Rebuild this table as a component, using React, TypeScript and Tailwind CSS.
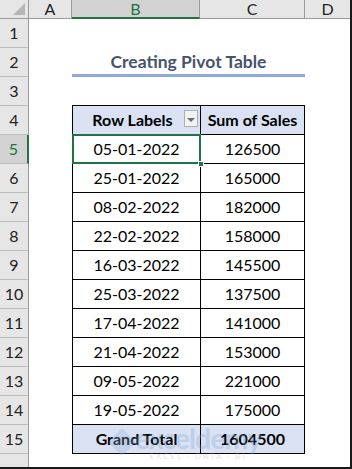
import React from "react";

const rows = [
  ["05-01-2022", "126500"],
  ["25-01-2022", "165000"],
  ["08-02-2022", "182000"],
  ["22-02-2022", "158000"],
  ["16-03-2022", "145500"],
  ["25-03-2022", "137500"],
  ["17-04-2022", "141000"],
  ["21-04-2022", "153000"],
  ["09-05-2022", "221000"],
  ["19-05-2022", "175000"],
];

function RowHead(props: { n: number; active?: boolean }) {
  return (
    <div
      className={`w-[29px] h-[29px] shrink-0 flex items-center justify-center border-b border-[#bdbdbd] text-[16px] ${
        props.active
          ? "bg-[#d2d2d2] border-r-2 border-r-[#217346] text-[#217346]"
          : "bg-[#e6e6e6] border-r border-r-[#9b9b9b] text-[#222]"
      }`}
    >
      {props.n}
    </div>
  );
}

function Row(props: { n: number; active?: boolean; children?: React.ReactNode }) {
  return (
    <div className="flex h-[29px]">
      <RowHead n={props.n} active={props.active} />
      <div className="w-[43px] shrink-0" />
      {props.children}
    </div>
  );
}

export default function App() {
  return (
    <div
      className="w-[352px] h-[469px] overflow-hidden bg-white border-r-2 border-b-2 border-[#1a1a1a] relative"
      style={{ fontFamily: "Lato, 'Liberation Sans', sans-serif" }}
    >
      {/* column headers */}
      <div className="flex h-[19px] text-[16px] text-[#222]">
        <div className="w-[29px] shrink-0 bg-[#e6e6e6] border-r border-b border-[#9b9b9b] relative">
          <div className="absolute right-[3px] bottom-[3px] w-0 h-0 border-l-[12px] border-l-transparent border-b-[12px] border-b-[#b7b7b7]" />
        </div>
        <div className="w-[43px] shrink-0 bg-[#e6e6e6] border-r border-b border-[#9b9b9b] flex items-center justify-center leading-none">
          A
        </div>
        <div className="w-[128px] shrink-0 bg-[#d2d2d2] border-r border-r-[#9b9b9b] border-b-2 border-b-[#217346] flex items-center justify-center leading-none text-[#217346]">
          B
        </div>
        <div className="w-[105px] shrink-0 bg-[#e6e6e6] border-r border-b border-[#9b9b9b] flex items-center justify-center leading-none">
          C
        </div>
        <div className="flex-1 bg-[#e6e6e6] border-b border-[#9b9b9b] flex items-center justify-center leading-none">
          D
        </div>
      </div>

      <Row n={1} />
      <Row n={2}>
        <div className="w-[233px] shrink-0 border-b-[3px] border-[#8ea9db] flex items-center justify-center pt-[2px] text-[17.5px] font-bold text-[#44546a]">
          Creating Pivot Table
        </div>
      </Row>
      <Row n={3}>
        <div className="w-[233px] shrink-0 border-b border-black" />
      </Row>
      <Row n={4}>
        <div className="w-[128px] shrink-0 bg-[#d9e1f2] border-l border-b border-black flex items-center justify-center relative text-[16px] font-bold text-black">
          <span className="mr-[8px]">Row Labels</span>
          <div className="absolute right-[2px] top-[4px] w-[14px] h-[17px] bg-[#f2f2f2] border border-[#b0b0b0] flex items-end justify-center pb-[4px]">
            <div className="w-0 h-0 border-l-[4px] border-r-[4px] border-t-[4px] border-l-transparent border-r-transparent border-t-[#6b6b6b]" />
          </div>
        </div>
        <div className="w-[105px] shrink-0 bg-[#d9e1f2] border-l border-r border-b border-black flex items-center justify-center text-[16px] font-bold text-black">
          Sum of Sales
        </div>
      </Row>
      {rows.map(([d, v], i) => (
        <Row key={d} n={i + 5} active={i === 0}>
          <div className="w-[128px] shrink-0 border-l border-b border-black flex items-center justify-center text-[16px] text-black relative">
            {d}
            {i === 0 && (
              <>
                <div className="absolute -left-px -top-px w-[129px] h-[30px] border-2 border-[#217346]" />
                <div className="absolute right-[-4px] bottom-[-4px] w-[6px] h-[6px] bg-[#217346] border border-white" />
              </>
            )}
          </div>
          <div className="w-[105px] shrink-0 border-l border-r border-b border-black flex items-center justify-center text-[16px] text-black">
            {v}
          </div>
        </Row>
      ))}
      <Row n={15}>
        <div className="w-[128px] shrink-0 bg-[#d9e1f2] border-l border-b border-black flex items-center justify-center text-[16px] font-bold text-black">
          Grand Total
        </div>
        <div className="w-[105px] shrink-0 bg-[#d9e1f2] border-l border-r border-b border-black flex items-center justify-center text-[16px] font-bold text-black">
          1604500
        </div>
      </Row>
      <div className="flex h-[14px]">
        <div className="w-[29px] shrink-0 bg-[#e6e6e6] border-r border-[#9b9b9b]" />
      </div>

      {/* watermark */}
      <div className="absolute left-[112px] top-[424px] flex items-center gap-[3px] opacity-30 pointer-events-none">
        <div className="w-[20px] h-[20px] bg-[#8fb0d8] rotate-45 rounded-[3px]" />
        <div className="flex flex-col items-center leading-none">
          <span className="text-[28px] font-bold text-[#7fa6d6] tracking-tight">exceldemy</span>
          <span className="text-[8px] text-[#9aa6b2] tracking-[2px]">EXCEL · DATA · BI</span>
        </div>
      </div>
    </div>
  );
}
